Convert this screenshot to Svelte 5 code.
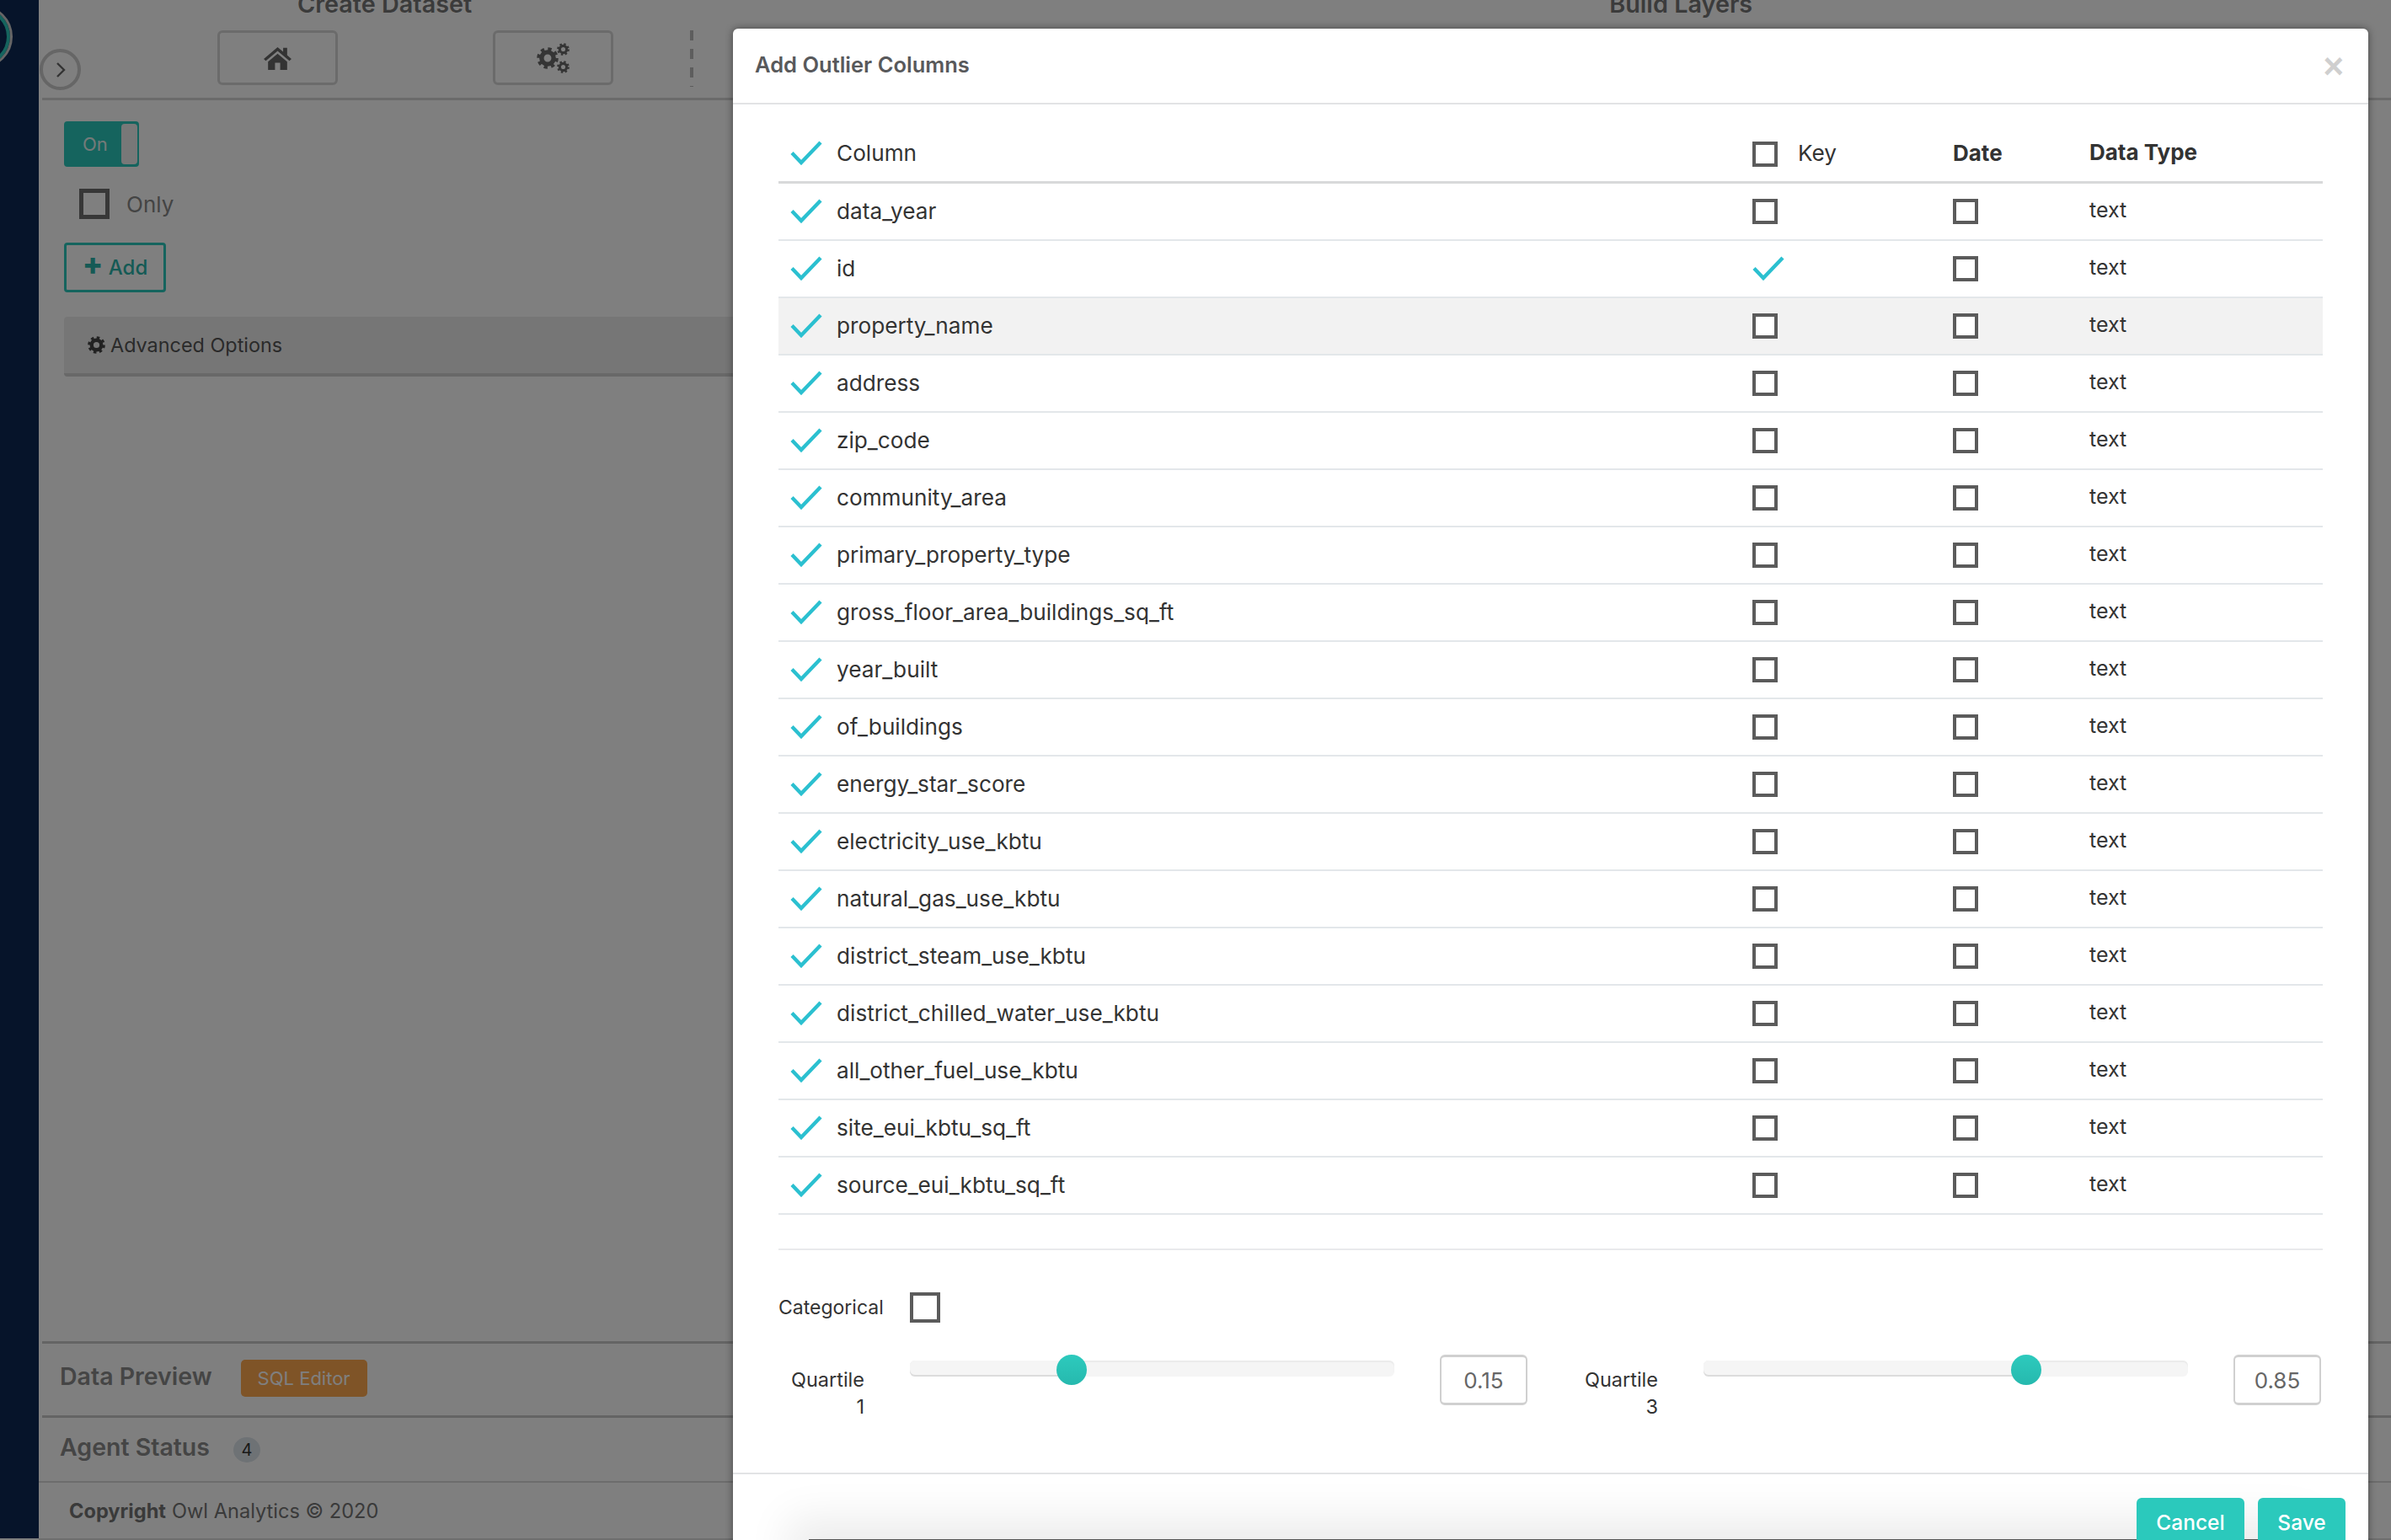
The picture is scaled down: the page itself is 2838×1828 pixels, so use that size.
<script>
  const rows = ['data_year','id','property_name','address','zip_code','community_area','primary_property_type','gross_floor_area_buildings_sq_ft','year_built','of_buildings','energy_star_score','electricity_use_kbtu','natural_gas_use_kbtu','district_steam_use_kbtu','district_chilled_water_use_kbtu','all_other_fuel_use_kbtu','site_eui_kbtu_sq_ft','source_eui_kbtu_sq_ft'];
</script>

{#snippet check()}
  <svg class="check" viewBox="0 0 38 29" width="38" height="29"><path d="M2 14.5 13 26 36 2" fill="none" stroke="#2bc0d0" stroke-width="4.4"/></svg>
{/snippet}

{#snippet cog(size, color = '#6a6a6a')}
  <svg width={size} height={size} viewBox="0 0 24 24">
    <circle cx="12" cy="12" r="6.6" fill="none" stroke={color} stroke-width="5"/>
    <circle cx="12" cy="12" r="9.6" fill="none" stroke={color} stroke-width="4.4" stroke-dasharray="3.77 3.77"/>
  </svg>
{/snippet}

<div class="page">
  <aside class="side"><div class="ring"></div></aside>
  <main class="main">
    <div class="titles"><h2>Create Dataset</h2><h2 class="t2">Build Layers</h2></div>
    <div class="tools">
      <span class="chev"><svg width="12" height="22" viewBox="0 0 12 22"><path d="M2 3l8 8-8 8" fill="none" stroke="#666" stroke-width="2.4"/></svg></span>
      <button class="tool tool1" aria-label="Home">
        <svg width="35" height="28" viewBox="0 0 34 30" preserveAspectRatio="none"><path d="M17 1 1 16l2.4 2.6L17 6l13.6 12.6L33 16l-5-4.7V2h-4.6v5zM6 19.5 17 9.5l11 10V30h-8v-9h-6v9H6z" fill="#666"/></svg>
      </button>
      <button class="tool tool2" aria-label="Settings">
        <span class="gears">
          <span class="g1">{@render cog(26)}</span>
          <span class="g2">{@render cog(15)}</span>
          <span class="g3">{@render cog(15)}</span>
        </span>
      </button>
      <span class="dash"></span>
    </div>
    <div class="content">
      <div class="toggle"><span>On</span><i></i></div>
      <label class="only"><span class="box big"></span>Only</label>
      <button class="add"><b>+</b> Add</button>
      <div class="adv"><span class="advcog">{@render cog(21, '#444')}</span>Advanced Options</div>
    </div>
    <section class="foot-row preview"><h3>Data Preview</h3><button class="sql">SQL Editor</button></section>
    <section class="foot-row agent"><h3>Agent Status</h3><span class="badge">4</span></section>
    <footer class="copy"><b>Copyright</b> Owl Analytics © 2020</footer>
  </main>
  <div class="overlay"></div>

  <div class="modal">
    <header class="mhead"><h1>Add Outlier Columns</h1><span class="close">×</span></header>
    <div class="mbody">
      <div class="row head">
        <span class="c1">{@render check()}</span>
        <span class="name">Column</span>
        <span class="key"><span class="box"></span><span class="keytxt">Key</span></span>
        <b class="date">Date</b>
        <b class="type">Data Type</b>
      </div>
      {#each rows as r}
        <div class="row" class:hl={r === 'property_name'}>
          <span class="c1">{@render check()}</span>
          <span class="name">{r}</span>
          <span class="key">{#if r === 'id'}{@render check()}{:else}<span class="box"></span>{/if}</span>
          <span class="date"><span class="box"></span></span>
          <span class="type">text</span>
        </div>
      {/each}
      <hr />
      <div class="cat"><span>Categorical</span><span class="box cbig"></span></div>
      <div class="quart">
        <div class="q q1">
          <span class="ql">Quartile 1</span>
          <div class="track"><i class="fill" style="width: 190px"></i><i class="thumb" style="left: 174px"></i></div>
          <span class="val">0.15</span>
        </div>
        <div class="q q3">
          <span class="ql">Quartile 3</span>
          <div class="track"><i class="fill" style="width: 380px"></i><i class="thumb" style="left: 365px"></i></div>
          <span class="val">0.85</span>
        </div>
      </div>
    </div>
    <div class="mfoot"><button class="cancel">Cancel</button><button class="save">Save</button></div>
  </div>
</div>

<style>
  :global(body) { margin: 0; background: #fff; overflow: hidden; }
  .page { position: relative; display: flex; width: 2838px; height: 1828px; overflow: hidden; font-family: Inter, "Liberation Sans", sans-serif; color: #333; background: #fff; }
  .side { position: relative; width: 46px; flex: none; background: #0c2854; overflow: hidden; height: 1826px; }
  .ring { position: absolute; left: -60px; top: 6px; width: 75px; height: 75px; box-sizing: border-box; border: 3px solid #ccc; border-radius: 50%; box-shadow: inset 0 0 0 4px #2bc9bc; }
  .main { flex: 1; display: flex; flex-direction: column; min-width: 0; height: 1826px; border-bottom: 2px solid #ddd; }

  .titles { height: 44px; margin-top: -10px; flex: none; display: flex; align-items: flex-start; }
  h2 { margin: 0; font-size: 28.8px; line-height: 30px; font-weight: 600; color: #777; position: relative; left: 307px; }
  .t2 { left: 1657px; }
  .tools { height: 85px; flex: none; box-sizing: border-box; padding-top: 2px; border-bottom: 3px solid #d4d4d4; margin-left: 4px; display: flex; align-items: flex-start; position: relative; }
  .chev { position: absolute; left: -3px; top: 24px; width: 49px; height: 49px; box-sizing: border-box; border: 4px solid #ccc; border-radius: 50%; display: flex; align-items: center; justify-content: center; background: #fff; }
  .tool { width: 143px; height: 65px; box-sizing: border-box; background: #fff; border: 3px solid #d6d6d6; border-radius: 6px; padding: 0; display: flex; align-items: center; justify-content: center; }
  .tool1 { margin-left: 208px; }
  .tool2 { margin-left: 184px; }
  .gears { position: relative; width: 40px; height: 36px; display: block; }
  .gears span { position: absolute; display: flex; }
  .g1 { left: 0; top: 5px; }
  .g2 { left: 24px; top: 0; }
  .g3 { left: 24px; top: 21px; }
  .dash { margin-left: 91px; height: 67px; width: 4px; background: repeating-linear-gradient(#bbb 0 12px, transparent 12px 22px); }

  .content { flex: 1; padding: 25px 0 0 30px; display: flex; flex-direction: column; align-items: flex-start; }
  .toggle { width: 89px; height: 54px; box-sizing: border-box; background: #2bc9bc; border-radius: 4px; padding: 3px 2px 3px 0; display: flex; align-items: center; justify-content: space-between; }
  .toggle span { color: #e8f5f3; font-size: 22px; margin-left: 22px; }
  .toggle i { width: 19px; height: 48px; background: #f0f0f0; border-radius: 4px; }
  .only { display: flex; align-items: center; gap: 20px; font-size: 26px; color: #888; margin: 26px 0 0 18px; height: 36px; }
  .box { display: inline-block; width: 30px; height: 30px; box-sizing: border-box; border: 4px solid #5b5b5b; flex: none; background: #fff; }
  .box.big { width: 36px; height: 36px; border-width: 5px; border-color: #6e6e6e; }
  .row .box { position: relative; top: 1px; }
  .add { margin-top: 28px; width: 121px; height: 59px; box-sizing: border-box; background: #fff; border: 3px solid #2bc9bc; border-radius: 4px; color: #2bb5aa; font: 500 24px Inter, sans-serif; padding: 0; }
  .add b { font-size: 36px; line-height: 20px; font-weight: 800; }
  .adv { margin-top: 29px; width: 830px; height: 71px; box-sizing: border-box; background: #ededed; border-bottom: 4px solid #d0d0d0; border-radius: 4px; font-size: 23.4px; color: #555; display: flex; align-items: center; padding-left: 28px; gap: 6px; }
  .advcog { display: flex; }
  .foot-row { display: flex; align-items: center; padding-left: 21px; margin-left: 4px; box-sizing: border-box; flex: none; }
  .foot-row h3 { margin: 0; font-size: 28.5px; font-weight: 600; color: #8a8a8a; }
  .preview { height: 88px; border-top: 3px solid #c8c8c8; padding-bottom: 8px; }
  .sql { margin-left: 34px; width: 150px; height: 44px; border: 0; border-radius: 5px; background: #fea84e; color: #fff; font: 400 22px Inter, sans-serif; padding: 0; position: relative; top: 2px; }
  .agent { height: 78px; border-top: 3px solid #c8c8c8; padding-bottom: 6px; }
  .badge { margin-left: 28px; width: 32px; height: 30px; border-radius: 50%; background: #dce4ea; display: flex; align-items: center; justify-content: center; font-size: 20px; color: #333; position: relative; top: 3px; }
  .copy { height: 68px; flex: none; border-top: 2px solid #d8d8d8; font-size: 23.6px; color: #747474; display: flex; align-items: center; gap: 7px; padding-left: 36px; box-sizing: border-box; }
  .copy b { font-weight: 700; }

  .overlay { position: absolute; inset: 0; background: rgba(0,0,0,.5); }
  .modal { position: absolute; left: 870px; top: 34px; width: 1941px; height: 1810px; background: #fff; border-radius: 6px 6px 0 0; box-shadow: 0 0 10px rgba(0,0,0,.45); display: flex; flex-direction: column; }
  .mhead { height: 90px; flex: none; box-sizing: border-box; border-bottom: 2px solid #e2e3e5; padding-left: 26px; display: flex; align-items: center; justify-content: space-between; padding-bottom: 4px; }
  h1 { margin: 0; font-size: 25.5px; font-weight: 600; color: #58595b; }
  .close { font: 700 42px "Liberation Sans", sans-serif; color: #cfcfcf; margin-right: 29px; position: relative; top: 3px; }
  .mbody { flex: 1; padding: 26px 54px 0; display: flex; flex-direction: column; }
  .row { height: 68px; flex: none; box-sizing: border-box; display: grid; grid-template-columns: 69px 1087px 238px 163px 1fr; align-items: center; border-bottom: 2px solid #e3e7ea; padding-bottom: 2px; font-size: 26.2px; color: #333; }
  .row.head { border-bottom: 3px solid #d8d9da; }
  .hl { background: #f2f2f2; }
  .c1 { display: flex; padding-left: 14px; }
  .check { display: block; }
  .key { display: flex; align-items: center; }
  .keytxt { margin-left: 24px; }
  .date { display: flex; }
  .row b { font-weight: 700; font-size: 26px; }
  .type { font-size: 25px; position: relative; top: -1px; left: -1px; }
  hr { width: 100%; border: 0; border-top: 2px solid #e9eaec; margin: 40px 0 0; }
  .cat { display: flex; align-items: center; margin-top: 50px; height: 36px; font-size: 23px; }
  .cat span:first-child { width: 156px; }
  .cbig { width: 36px; height: 36px; }
  .quart { display: flex; justify-content: space-between; margin-top: 38px; }
  .q { display: flex; align-items: flex-start; }
  .q1 { width: 889px; }
  .q3 { width: 876px; }
  .ql { width: 102px; flex: none; text-align: right; font-size: 23.5px; line-height: 32px; padding-top: 14px; color: #333; }
  .q3 .ql { margin-left: -15px; }
  .track { position: relative; height: 19px; width: 575px; flex: none; margin: 7px 0 0 54px; background: #f5f5f5; border-radius: 6px; box-shadow: inset 0 2px 1px #ebebeb; }
  .fill { position: absolute; left: 0; top: 0; height: 19px; background: #f5f5f5; border-radius: 6px 0 0 6px; box-shadow: inset 0 -2px 0 #dcdcdc; }
  .thumb { position: absolute; top: -7px; width: 36px; height: 36px; border-radius: 50%; background: linear-gradient(#2dcabd, #26b9ae); }
  .val { margin-left: 54px; width: 104px; height: 60px; flex: none; box-sizing: border-box; border: 2px solid #d0d0d0; border-top-width: 3px; border-bottom-width: 3px; border-radius: 6px; display: flex; align-items: center; justify-content: center; font-size: 26px; color: #666; }
  .mfoot { position: relative; height: 96px; flex: none; box-sizing: border-box; border-top: 2px solid #e2e3e5; background: #fff; display: flex; justify-content: flex-end; gap: 16px; padding: 28px 27px 0 0; overflow: hidden; }
  .mfoot::after { content: ""; position: absolute; left: 90px; right: 90px; top: 77px; height: 20px; background: #555; box-shadow: 0 0 50px 25px rgba(0,0,0,.08); }
  .mfoot button { position: relative; z-index: 1; height: 58px; padding: 0; border: 0; border-radius: 6px 6px 0 0; background: #2bc9bc; color: #fff; font: 500 24.5px Inter, sans-serif; }
  .cancel { width: 128px; }
  .save { width: 104px; }
</style>
